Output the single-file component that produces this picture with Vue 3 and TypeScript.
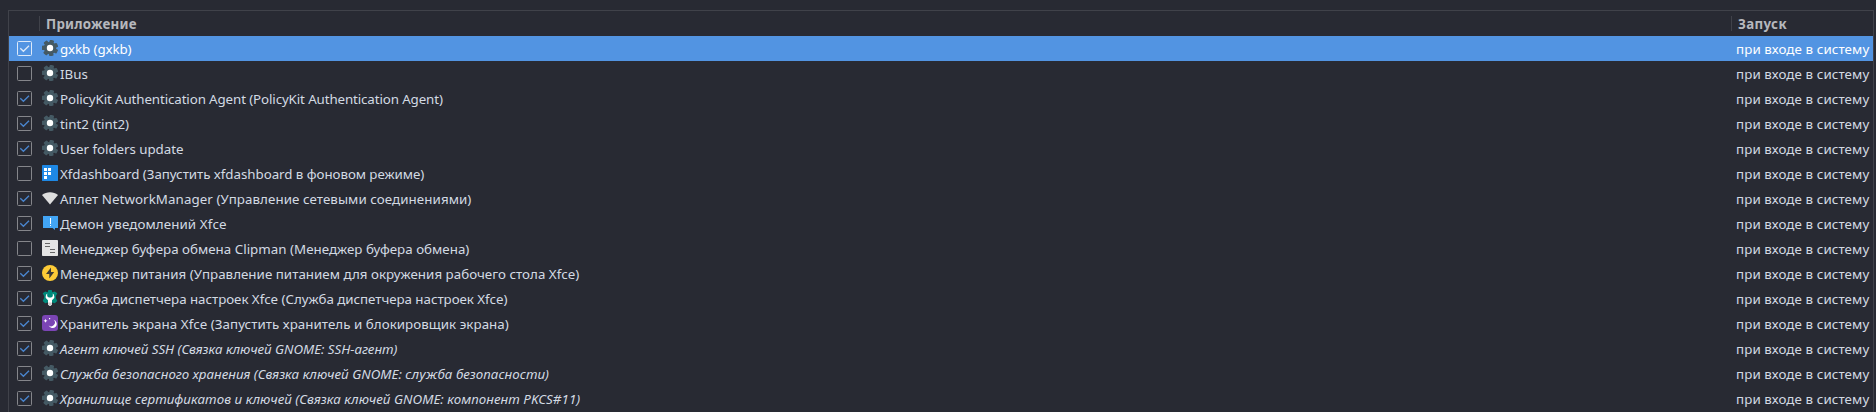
<script setup lang="ts">
type IconName = 'gear' | 'dashboard' | 'network' | 'notify' | 'clipman' | 'power' | 'settings' | 'saver'

interface Entry {
  label: string
  icon: IconName
  enabled: boolean
  /** letter spacing in px */
  track: number
  selected?: boolean
  italic?: boolean
}

const trigger = 'при входе в систему'
const teeth = [-75, -24, 28, 79, 130, 182, 233]

const entries: Entry[] = [
  { label: 'gxkb (gxkb)', icon: 'gear', enabled: true, track: -0.1, selected: true },
  { label: 'IBus', icon: 'gear', enabled: false, track: 0 },
  { label: 'PolicyKit Authentication Agent (PolicyKit Authentication Agent)', icon: 'gear', enabled: true, track: -0.11 },
  { label: 'tint2 (tint2)', icon: 'gear', enabled: true, track: -0.02 },
  { label: 'User folders update', icon: 'gear', enabled: true, track: -0.04 },
  { label: 'Xfdashboard (Запустить xfdashboard в фоновом режиме)', icon: 'dashboard', enabled: false, track: -0.045 },
  { label: 'Аплет NetworkManager (Управление сетевыми соединениями)', icon: 'network', enabled: true, track: 0.075 },
  { label: 'Демон уведомлений Xfce', icon: 'notify', enabled: true, track: 0.1 },
  { label: 'Менеджер буфера обмена Clipman (Менеджер буфера обмена)', icon: 'clipman', enabled: false, track: 0.02 },
  { label: 'Менеджер питания (Управление питанием для окружения рабочего стола Xfce)', icon: 'power', enabled: true, track: 0.03 },
  { label: 'Служба диспетчера настроек Xfce (Служба диспетчера настроек Xfce)', icon: 'settings', enabled: true, track: -0.04 },
  { label: 'Хранитель экрана Xfce (Запустить хранитель и блокировщик экрана)', icon: 'saver', enabled: true, track: 0.045 },
  { label: 'Агент ключей SSH (Связка ключей GNOME: SSH-агент)', icon: 'gear', enabled: true, track: -0.03, italic: true },
  { label: 'Служба безопасного хранения (Связка ключей GNOME: служба безопасности)', icon: 'gear', enabled: true, track: 0.025, italic: true },
  { label: 'Хранилище сертификатов и ключей (Связка ключей GNOME: компонент PKCS#11)', icon: 'gear', enabled: true, track: 0.045, italic: true },
]
</script>

<template>
  <main class="window">
    <section class="list">
      <header class="row head">
        <span class="c-check"></span>
        <span class="c-app">Приложение</span>
        <span class="c-run">Запуск</span>
      </header>
      <div
        v-for="entry in entries"
        :key="entry.label"
        class="row item"
        :class="{ selected: entry.selected, italic: entry.italic }"
      >
        <svg class="check" viewBox="0 0 15 15">
          <rect class="box" x=".5" y=".5" width="14" height="14" rx="1" />
          <path v-if="entry.enabled" class="tick" d="M3.300 7.200 6.400 10.300 12 4.800" />
        </svg>
        <svg class="icon" viewBox="0 0 16 16">
          <template v-if="entry.icon === 'gear'">
            <circle cx="8" cy="8" r="6.200" fill="#455a64" />
            <rect
              v-for="angle in teeth"
              :key="angle"
              x="12"
              y="5.800"
              width="4.200"
              height="4.400"
              rx="1"
              fill="#455a64"
              :transform="`rotate(${angle} 8 8)`"
            />
            <circle cx="8" cy="8" r="3.200" fill="#fff" />
          </template>
          <template v-else-if="entry.icon === 'dashboard'">
            <rect width="16" height="16" rx=".4" fill="#1e88e5" />
            <path fill="#fff" d="M2 3h3v3H2zM6 3h3v3H6zM2 7h3v3H2zM6 7h3v3H6zM2 11h3v3H2z" />
          </template>
          <path v-else-if="entry.icon === 'network'" fill="#dedede" d="M0 5C4.400 1.200 11.600 1.200 16 5L8 14.600Z" />
          <template v-else-if="entry.icon === 'notify'">
            <path fill="#42a5f5" d="M1 1H16V13H13V15L10.500 13H1Z" />
            <path fill="#fff" d="M8 3h1v6H8zM8 10h1v1H8z" />
          </template>
          <template v-else-if="entry.icon === 'clipman'">
            <rect width="16" height="16" rx=".8" fill="#e4e4e4" />
            <path fill="#666" d="M3 3h5v1H3zM3 6h5v1H3zM8 9h5v1H8zM8 12h5v1H8z" />
          </template>
          <template v-else-if="entry.icon === 'power'">
            <circle cx="8" cy="8" r="8" fill="#fdcb37" />
            <path fill="#3d3a35" d="M9 2.500 4 9H7.300V13.500L12.200 7H9Z" />
          </template>
          <template v-else-if="entry.icon === 'settings'">
            <path
              fill="#00897b"
              d="M6.300 0H9.700L10.300 2.200 12.700 1.500 15.300 3.300 13.900 6 13.900 8 15.300 11 12.800 13.200 10.300 12.400 8 14 5.700 12.400 3.200 13.200 .7 11 2.100 8 2.100 6 .7 3.300 3.300 1.500 5.700 2.200Z"
            />
            <path fill="#fff" d="M5.200 3.500V6.300L6.800 7.500H9.200L10.800 6.300V3.500Q12.800 5 12.200 8L10 10.300V14.500Q8 17.300 6 14.500V10.300L3.800 8Q3.200 5 5.200 3.500Z" />
            <path fill="#cfcfcf" d="M6.200 12.500H9.800V14.500Q8 16.800 6.200 14.500Z" />
          </template>
          <template v-else>
            <rect width="16" height="16" rx="3" fill="#7b45b5" />
            <path fill="#fff" d="M11.600 4.800A4.200 4.200 0 1 1 6.600 10.300A3.700 3.700 0 0 0 11.600 4.800Z" />
            <path fill="#fff" d="M3.500 3.800l.6 1.400 1.400.6-1.400.6-.6 1.400-.6-1.400L1.500 5.800l1.400-.6ZM7 3h1.200v1.200H7z" />
          </template>
        </svg>
        <span class="label" :style="{ letterSpacing: `${entry.track}px` }">{{ entry.label }}</span>
        <span class="run">{{ trigger }}</span>
      </div>
    </section>
  </main>
</template>

<style>
body {
  margin: 0;
  background: #282a33;
}
</style>

<style scoped>
.window {
  box-sizing: border-box;
  width: 1876px;
  height: 412px;
  padding: 10px 2px 0 8px;
  overflow: hidden;
  background: #282a33;
  color: #d3dae3;
  font: 13.333px/25px "Noto Sans", sans-serif;
  white-space: nowrap;
}
.list {
  box-sizing: border-box;
  height: 420px;
  border: 1px solid #40424a;
}
.row {
  display: flex;
  align-items: center;
  height: 25px;
}
.head {
  color: #b6b8bd;
  font-weight: 700;
}
.c-check {
  width: 30px;
}
.c-app,
.c-run {
  height: 15px;
  padding-left: 6px;
  border-left: 1px solid #40424a;
  line-height: 17px;
  letter-spacing: 0.23px;
}
.c-app {
  flex: 1;
}
.c-run {
  width: 135px;
  letter-spacing: 0.35px;
}
.selected {
  background: #5294e2;
  color: #fff;
}
.italic .label {
  font-style: italic;
}
.check {
  width: 15px;
  height: 15px;
  margin-left: 8px;
}
.box {
  fill: none;
  stroke: #85868b;
}
.tick {
  fill: none;
  stroke: #4a86cf;
  stroke-width: 1.3;
}
.selected .box,
.selected .tick {
  stroke: #dce9f9;
}
.icon {
  width: 16px;
  height: 16px;
  margin: -1px 2px 0 10px;
}
.label,
.run {
  height: 25px;
  line-height: 27px;
}
.label {
  flex: 1;
}
.run {
  width: 137px;
  letter-spacing: 0.11px;
}
</style>
